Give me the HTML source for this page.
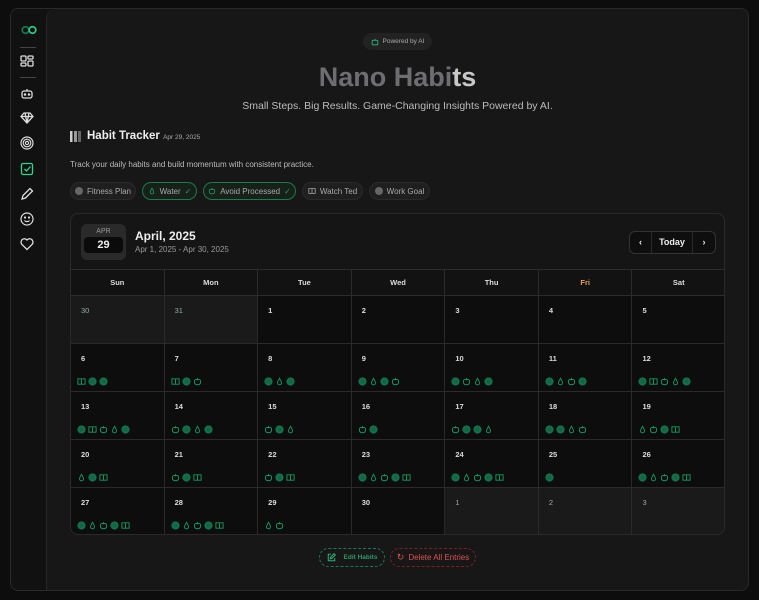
<!DOCTYPE html>
<html><head><meta charset="utf-8">
<style>
*{box-sizing:border-box;margin:0;padding:0}
body{width:759px;height:600px;background:#0d0d0d;font-family:"Liberation Sans",sans-serif;color:#ddd;overflow:hidden;position:relative}
.app{position:absolute;left:10px;top:8px;width:739px;height:583px;border:1px solid #2a2a2a;border-radius:8px;background:#121212;overflow:hidden}
.side{position:absolute;left:0;top:0;width:35px;height:100%;background:#111}
.main{position:absolute;left:35px;top:0;right:0;bottom:0;background:#171717;border-left:1px solid #262626;border-top-left-radius:10px}
.si{position:absolute;left:9px;width:14px;height:14px}
.sep{position:absolute;left:9px;width:16px;height:1px;background:#444}
.pill{position:absolute;border-radius:12px;font-size:8px;display:flex;align-items:center;justify-content:center;gap:4px;padding:0;white-space:nowrap}
.cal{position:absolute;left:23px;top:204px;width:655px;height:322px;border:1px solid #2a2a2a;border-radius:8px;background:#151515;overflow:hidden}
.grid{position:absolute;left:0;top:55px;width:655px}
.hd{display:flex;height:27px;border-top:1px solid #2c2c2c;border-bottom:1px solid #2c2c2c;background:#121212}
.hd div{flex:1;border-right:1px solid #2c2c2c;font-size:7.5px;font-weight:bold;text-align:center;line-height:26px;color:#ddd}
.row{display:flex;height:48px;border-bottom:1px solid #2a2a2a}
.c{flex:1;border-right:1px solid #2a2a2a;background:#0d0d0d;position:relative;font-size:7.5px;font-weight:bold}
.c.o{background:#1a1a1a;font-weight:normal}
.c b{position:absolute;left:10px;top:10px;font-weight:inherit;color:#ddd}
.c.o b{color:#9aa}
.ic{position:absolute;left:6px;top:33px;display:flex;gap:2px}
.ic svg{width:9px;height:9px}
</style></head><body>
<svg width="0" height="0" style="position:absolute">
<defs>
<symbol id="C" viewBox="0 0 10 10"><circle cx="5" cy="5" r="4.6" fill="#13704a"/><circle cx="5" cy="5" r="1.6" fill="none" stroke="#0e5a3b" stroke-width=".6"/></symbol>
<symbol id="D" viewBox="0 0 10 10"><path d="M5 1.5C4 3.5 2.8 4.8 2.8 6.5a2.2 2.2 0 0 0 4.4 0C7.2 4.8 6 3.5 5 1.5z" fill="none" stroke="#13a065" stroke-width="1"/></symbol>
<symbol id="A" viewBox="0 0 10 10"><path d="M5 3.2C3.5 2.2 1.5 2.8 1.5 5.3 1.5 7.6 3.2 9 5 8.4 6.8 9 8.5 7.6 8.5 5.3 8.5 2.8 6.5 2.2 5 3.2zM5 3.2V1.3" fill="none" stroke="#13a065" stroke-width="1"/></symbol>
<symbol id="B" viewBox="0 0 10 10"><path d="M1 2h3.2c.5 0 .8.3.8.8V8.5 2.8c0-.5.3-.8.8-.8H9v6H1z" fill="none" stroke="#13a065" stroke-width="1"/></symbol>
</defs></svg>
<div class="app">
 <div class="side">
  <svg style="position:absolute;left:10px;top:16px" width="16" height="10" viewBox="0 0 16 10"><circle cx="4.5" cy="5" r="3.3" fill="none" stroke="#1b7a52" stroke-width="1.6"/><circle cx="11.5" cy="5" r="3.3" fill="none" stroke="#2ed38c" stroke-width="1.6"/></svg>
  <div class="sep" style="top:38px"></div>
  <svg class="si" style="top:46px" viewBox="0 0 14 14" fill="none" stroke="#ddd" stroke-width="1.3"><rect x="1" y="1" width="5" height="5" rx="1"/><rect x="8" y="1" width="5" height="3" rx="1"/><rect x="1" y="8" width="5" height="3" rx="1"/><rect x="8" y="6" width="5" height="5" rx="1"/></svg>
  <div class="sep" style="top:68px"></div>
  <svg class="si" style="top:78px" viewBox="0 0 14 14" fill="none" stroke="#ddd" stroke-width="1.3"><rect x="2" y="4" width="10" height="7" rx="2"/><path d="M7 4V2"/><circle cx="5" cy="7.5" r=".6"/><circle cx="9" cy="7.5" r=".6"/></svg>
  <svg class="si" style="top:102px" viewBox="0 0 14 14" fill="none" stroke="#ddd" stroke-width="1.3"><path d="M4 2h6l3 3.5L7 12 1 5.5zM1 5.5h12M5 2l2 10 2-10"/></svg>
  <svg class="si" style="top:127px" viewBox="0 0 14 14" fill="none" stroke="#ddd" stroke-width="1.2"><circle cx="7" cy="7" r="6"/><circle cx="7" cy="7" r="3.8"/><circle cx="7" cy="7" r="1.6"/></svg>
  <svg class="si" style="top:153px" viewBox="0 0 14 14" fill="none" stroke="#2ed38c" stroke-width="1.3"><rect x="1.5" y="1.5" width="11" height="11" rx="1.5"/><path d="M4.5 7l2 2 4-4.5"/></svg>
  <svg class="si" style="top:178px" viewBox="0 0 14 14" fill="none" stroke="#ddd" stroke-width="1.3"><path d="M2 12l1-3.5L10 1.5 12.5 4 5.5 11z"/></svg>
  <svg class="si" style="top:203px" viewBox="0 0 14 14" fill="none" stroke="#ddd" stroke-width="1.2"><circle cx="7" cy="7" r="6"/><path d="M4.5 8.5c1.3 1.5 3.7 1.5 5 0"/><circle cx="5" cy="5.5" r=".5"/><circle cx="9" cy="5.5" r=".5"/></svg>
  <svg class="si" style="top:228px" viewBox="0 0 14 14" fill="none" stroke="#ddd" stroke-width="1.3"><path d="M7 12.5L1.8 7.3A3 3 0 0 1 7 3a3 3 0 0 1 5.2 4.3z"/></svg>
 </div>
 <div class="main">
  <div class="pill" style="left:316px;top:24px;width:69px;height:17px;background:#222;color:#aaa;font-size:6.5px"><svg width="8" height="8" viewBox="0 0 14 14" fill="none" stroke="#2ab07a" stroke-width="1.6"><rect x="2" y="4" width="10" height="8" rx="2"/><path d="M7 4V1.5"/></svg>Powered by AI</div>
  <div style="position:absolute;left:0;width:100%;top:53px;text-align:center;font-size:27px;font-weight:bold;color:#6e6e72">Nano Habi<span style="color:#c8c8c8">ts</span></div>
  <div style="position:absolute;left:0;width:100%;top:91px;text-align:center;font-size:10.5px;color:#bbb">Small Steps. Big Results. Game-Changing Insights Powered by AI.</div>
  <div style="position:absolute;left:23px;top:122px;width:11px;height:11px;background:linear-gradient(90deg,#ccc 0 25%,transparent 25% 37%,#999 37% 62%,transparent 62% 74%,#666 74%)"></div>
  <div style="position:absolute;left:40px;top:121px;font-size:11.5px;font-weight:bold;color:#eee">Habit Tracker <span style="font-size:6.5px;font-weight:normal;color:#aaa">Apr 29, 2025</span></div>
  <div style="position:absolute;left:23px;top:151px;font-size:8px;color:#bbb">Track your daily habits and build momentum with consistent practice.</div>
  <div class="pill" style="left:23px;top:173px;width:66px;height:18px;background:#1f1f1f;border:1px solid #2a2a2a;color:#aaa"><span style="width:8px;height:8px;border-radius:50%;background:#666"></span>Fitness Plan</div>
  <div class="pill" style="left:95px;top:173px;width:55px;height:18px;border:1px solid #1a7a52;background:#172019;color:#aaa"><svg width="8" height="8"><use href="#D"/></svg>Water <span style="color:#2a9a6a">✓</span></div>
  <div class="pill" style="left:156px;top:173px;width:93px;height:18px;border:1px solid #1a7a52;background:#172019;color:#aaa"><svg width="8" height="8"><use href="#A"/></svg>Avoid Processed <span style="color:#2a9a6a">✓</span></div>
  <div class="pill" style="left:255px;top:173px;width:61px;height:18px;background:#1f1f1f;border:1px solid #2a2a2a;color:#aaa"><svg width="8" height="8" viewBox="0 0 10 10"><path d="M1 2h3.2c.5 0 .8.3.8.8V8.5 2.8c0-.5.3-.8.8-.8H9v6H1z" fill="none" stroke="#aaa"/></svg>Watch Ted</div>
  <div class="pill" style="left:322px;top:173px;width:61px;height:18px;background:#1f1f1f;border:1px solid #2a2a2a;color:#aaa"><span style="width:8px;height:8px;border-radius:50%;background:#666"></span>Work Goal</div>
  <div class="cal">
   <div style="position:absolute;left:10px;top:10px;width:45px;height:36px;border-radius:6px;background:#2a2a2a;text-align:center"><div style="font-size:7px;color:#999;margin-top:4px">APR</div><div style="margin:2px 3px 0;height:16px;background:#0b0b0b;border-radius:4px;font-size:11px;font-weight:bold;color:#eee;line-height:16px">29</div></div>
   <div style="position:absolute;left:64px;top:15px;font-size:12px;font-weight:bold;color:#eee">April, 2025</div>
   <div style="position:absolute;left:64px;top:31px;font-size:8px;color:#999">Apr 1, 2025 - Apr 30, 2025</div>
   <div style="position:absolute;left:558px;top:17px;width:87px;height:23px;border:1px solid #333;border-radius:6px;background:#0e0e0e;display:flex;font-size:9px;font-weight:bold;color:#eee;align-items:center"><span style="width:22px;text-align:center;border-right:1px solid #2a2a2a;line-height:21px">‹</span><span style="flex:1;text-align:center;border-right:1px solid #2a2a2a;line-height:21px">Today</span><span style="width:22px;text-align:center;line-height:21px">›</span></div>
   <div class="grid">
    <div class="hd"><div>Sun</div><div>Mon</div><div>Tue</div><div>Wed</div><div>Thu</div><div style="color:#e8a050">Fri</div><div>Sat</div></div>
    <div class="row"><div class="c o"><b>30</b></div><div class="c o"><b>31</b></div><div class="c"><b>1</b></div><div class="c"><b>2</b></div><div class="c"><b>3</b></div><div class="c"><b>4</b></div><div class="c"><b>5</b></div></div>
    <div class="row">
     <div class="c"><b>6</b><div class="ic"><svg><use href="#B"/></svg><svg><use href="#C"/></svg><svg><use href="#C"/></svg></div></div>
     <div class="c"><b>7</b><div class="ic"><svg><use href="#B"/></svg><svg><use href="#C"/></svg><svg><use href="#A"/></svg></div></div>
     <div class="c"><b>8</b><div class="ic"><svg><use href="#C"/></svg><svg><use href="#D"/></svg><svg><use href="#C"/></svg></div></div>
     <div class="c"><b>9</b><div class="ic"><svg><use href="#C"/></svg><svg><use href="#D"/></svg><svg><use href="#C"/></svg><svg><use href="#A"/></svg></div></div>
     <div class="c"><b>10</b><div class="ic"><svg><use href="#C"/></svg><svg><use href="#A"/></svg><svg><use href="#D"/></svg><svg><use href="#C"/></svg></div></div>
     <div class="c"><b>11</b><div class="ic"><svg><use href="#C"/></svg><svg><use href="#D"/></svg><svg><use href="#A"/></svg><svg><use href="#C"/></svg></div></div>
     <div class="c"><b>12</b><div class="ic"><svg><use href="#C"/></svg><svg><use href="#B"/></svg><svg><use href="#A"/></svg><svg><use href="#D"/></svg><svg><use href="#C"/></svg></div></div>
    </div>
    <div class="row">
     <div class="c"><b>13</b><div class="ic"><svg><use href="#C"/></svg><svg><use href="#B"/></svg><svg><use href="#A"/></svg><svg><use href="#D"/></svg><svg><use href="#C"/></svg></div></div>
     <div class="c"><b>14</b><div class="ic"><svg><use href="#A"/></svg><svg><use href="#C"/></svg><svg><use href="#D"/></svg><svg><use href="#C"/></svg></div></div>
     <div class="c"><b>15</b><div class="ic"><svg><use href="#A"/></svg><svg><use href="#C"/></svg><svg><use href="#D"/></svg></div></div>
     <div class="c"><b>16</b><div class="ic"><svg><use href="#A"/></svg><svg><use href="#C"/></svg></div></div>
     <div class="c"><b>17</b><div class="ic"><svg><use href="#A"/></svg><svg><use href="#C"/></svg><svg><use href="#C"/></svg><svg><use href="#D"/></svg></div></div>
     <div class="c"><b>18</b><div class="ic"><svg><use href="#C"/></svg><svg><use href="#C"/></svg><svg><use href="#D"/></svg><svg><use href="#A"/></svg></div></div>
     <div class="c"><b>19</b><div class="ic"><svg><use href="#D"/></svg><svg><use href="#A"/></svg><svg><use href="#C"/></svg><svg><use href="#B"/></svg></div></div>
    </div>
    <div class="row">
     <div class="c"><b>20</b><div class="ic"><svg><use href="#D"/></svg><svg><use href="#C"/></svg><svg><use href="#B"/></svg></div></div>
     <div class="c"><b>21</b><div class="ic"><svg><use href="#A"/></svg><svg><use href="#C"/></svg><svg><use href="#B"/></svg></div></div>
     <div class="c"><b>22</b><div class="ic"><svg><use href="#A"/></svg><svg><use href="#C"/></svg><svg><use href="#B"/></svg></div></div>
     <div class="c"><b>23</b><div class="ic"><svg><use href="#C"/></svg><svg><use href="#D"/></svg><svg><use href="#A"/></svg><svg><use href="#C"/></svg><svg><use href="#B"/></svg></div></div>
     <div class="c"><b>24</b><div class="ic"><svg><use href="#C"/></svg><svg><use href="#D"/></svg><svg><use href="#A"/></svg><svg><use href="#C"/></svg><svg><use href="#B"/></svg></div></div>
     <div class="c"><b>25</b><div class="ic"><svg><use href="#C"/></svg></div></div>
     <div class="c"><b>26</b><div class="ic"><svg><use href="#C"/></svg><svg><use href="#D"/></svg><svg><use href="#A"/></svg><svg><use href="#C"/></svg><svg><use href="#B"/></svg></div></div>
    </div>
    <div class="row" style="border-bottom:none">
     <div class="c"><b>27</b><div class="ic"><svg><use href="#C"/></svg><svg><use href="#D"/></svg><svg><use href="#A"/></svg><svg><use href="#C"/></svg><svg><use href="#B"/></svg></div></div>
     <div class="c"><b>28</b><div class="ic"><svg><use href="#C"/></svg><svg><use href="#D"/></svg><svg><use href="#A"/></svg><svg><use href="#C"/></svg><svg><use href="#B"/></svg></div></div>
     <div class="c"><b>29</b><div class="ic"><svg><use href="#D"/></svg><svg><use href="#A"/></svg></div></div>
     <div class="c"><b>30</b></div>
     <div class="c o"><b>1</b></div><div class="c o"><b>2</b></div><div class="c o"><b>3</b></div>
    </div>
   </div>
  </div>
  <div class="pill" style="left:272px;top:539px;width:66px;height:19px;border:1px dashed #1a7a52;color:#2a9a6a;font-weight:bold;font-size:6.5px;gap:8px"><svg width="9" height="9" viewBox="0 0 14 14" fill="none" stroke="#2ab07a" stroke-width="1.6"><path d="M6 2H2v10h10V8M5 9l1-3 5-5 2 2-5 5z"/></svg>Edit Habits</div>
  <div class="pill" style="left:343px;top:539px;width:86px;height:19px;border:1px dashed #7a2020;color:#e05050;font-size:8px"><span style="font-size:9px">↻</span>Delete All Entries</div>
 </div>
</div>
</body></html>
